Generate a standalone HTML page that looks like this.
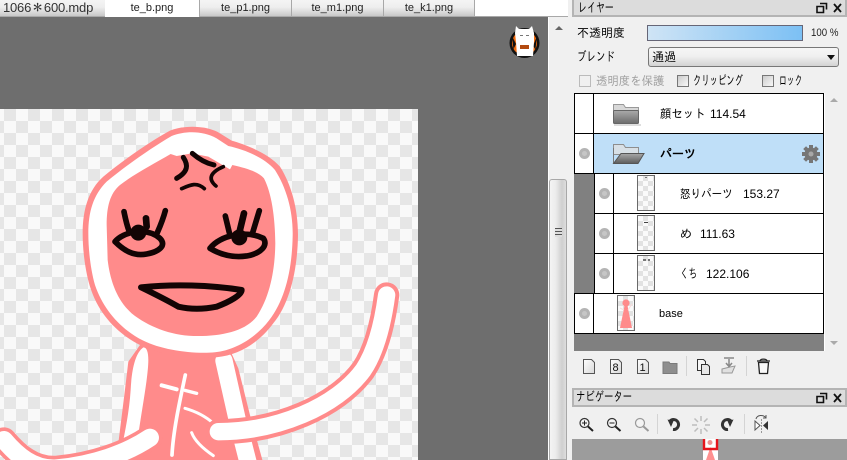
<!DOCTYPE html>
<html><head><meta charset="utf-8">
<style>
html,body{margin:0;padding:0;background:#f0f0f0}
#r{position:relative;width:847px;height:460px;overflow:hidden;background:#f0f0f0;font:12px "Liberation Sans","IPAGothic",sans-serif;color:#000}
.a{position:absolute;box-sizing:border-box}
.t{position:absolute;white-space:pre;line-height:14px;font-size:12px;font-family:"Liberation Sans","IPAGothic",sans-serif;transform-origin:0 50%}
.tab{position:absolute;top:0;height:16px;background:linear-gradient(#f4f4f4,#eeeeee 45%,#c8c8c8);border-right:1px solid #a8a8a8;text-align:center;line-height:16px;font-size:11px;color:#222}
.row{position:absolute;left:574px;width:250px;height:41px;border:1px solid #000;background:#fff;box-sizing:border-box}
.chk{position:absolute;top:75px;width:12px;height:12px;border:1px solid #777;background:linear-gradient(135deg,#ccc,#f8f8f8);box-sizing:border-box}
.dot{position:absolute;width:11px;height:11px;border-radius:50%;background:#b4b4b4}
.dot:after{content:"";position:absolute;left:3px;top:3px;width:5px;height:5px;border-radius:50%;background:#c6c6c6}
.v{position:absolute;top:0;bottom:0;width:1px;background:#000}
.thumb{position:absolute;width:18px;height:36px;border:1px solid #6a6a6a;box-sizing:border-box;background-color:#fff;background-image:conic-gradient(#e2e2e2 25%,#fafafa 0 50%,#e2e2e2 0 75%,#fafafa 0);background-size:10px 10px}
.ttl{position:absolute;left:572px;width:275px;height:17px;background:#dcdcdc;border:2px solid #b4b4b4;box-sizing:border-box}
</style></head><body><div id="r">

<!-- tabs -->
<div class="a" style="left:0;top:0;width:570px;height:17px;background:#fff;border-bottom:1px solid #a8a8a8"></div>
<div class="tab" style="left:0;width:105px;font-size:13px;text-align:left;padding-left:3px;color:#333;border-right:1px solid #999;letter-spacing:-.2px">1066＊600.mdp</div>
<div class="tab" style="left:105px;width:94px;background:#fff;height:17px">te_b.png</div>
<div class="tab" style="left:200px;width:91px">te_p1.png</div>
<div class="tab" style="left:292px;width:91px">te_m1.png</div>
<div class="tab" style="left:384px;width:90px">te_k1.png</div>

<!-- canvas -->
<svg class="a" style="left:0;top:17px" width="549" height="443" viewBox="0 17 549 443">
<defs>
<pattern id="ck" x="4" y="1" width="24" height="24" patternUnits="userSpaceOnUse">
<rect width="24" height="24" fill="#f9f9f9"/><rect x="12" width="12" height="12" fill="#e6e6e6"/><rect y="12" width="12" height="12" fill="#e6e6e6"/>
</pattern>
</defs>
<rect x="0" y="17" width="549" height="443" fill="#6e6e6e"/>
<rect x="0" y="109" width="418" height="351" fill="url(#ck)"/>

<!-- body -->
<g transform="translate(0,340) scale(.3333)">
<path d="M420 15 L385 65 C375 150 365 230 355 310 L345 370 L790 370 L750 225 L715 85 L690 30 Z" fill="#ff8b8b"/>
<path d="M430 22 C405 40 395 90 392 150 C388 210 378 260 370 300 L415 285 C425 210 445 110 445 60 C445 35 440 22 430 22Z" fill="#fff"/>
<path d="M672 62 L712 240 L745 370" fill="none" stroke="#fff" stroke-width="52" stroke-linecap="round"/>
<g fill="none" stroke="#fff" stroke-linecap="round">
<path d="M556 105 C540 180 520 270 516 345" stroke-width="11"/>
<path d="M485 136 L530 148" stroke-width="12"/>
<path d="M555 151 L590 160" stroke-width="10"/>
<path d="M555 205 C590 215 620 232 640 250" stroke-width="9"/>
<path d="M575 278 C585 305 615 330 640 347" stroke-width="9"/>
</g>
<!-- left arm -->
<path d="M450 293 C380 340 280 375 170 385 C100 390 50 345 12 300" fill="none" stroke="#ff8b8b" stroke-width="76" stroke-linecap="round"/>
<path d="M450 293 C380 340 280 375 170 385 C100 390 50 345 12 300" fill="none" stroke="#fff" stroke-width="54" stroke-linecap="round"/>
<!-- right arm -->
<path d="M655 275 C830 275 1010 200 1090 90 C1130 30 1150 -60 1160 -135" fill="none" stroke="#ff8b8b" stroke-width="76" stroke-linecap="round"/>
<path d="M655 275 C830 275 1010 200 1090 90 C1130 30 1150 -60 1160 -135" fill="none" stroke="#fff" stroke-width="52" stroke-linecap="round"/>
</g>

<!-- head -->
<g transform="translate(60,110) scale(.3333)">
<path d="M68 370 C68 300 85 240 130 200 C190 150 270 95 330 62 C370 45 440 45 480 70 L515 92 C560 105 625 130 660 170 C695 225 715 300 714 380 C712 480 690 580 640 640 C600 695 540 735 470 742 C400 750 300 735 240 705 C170 670 115 610 90 530 C75 480 68 420 68 370Z" fill="#ff8b8b"/>
<path d="M85 370 C85 305 100 255 140 215 C200 165 280 110 335 78 C375 62 430 62 470 85 L505 108 C560 120 615 145 645 180 C680 235 700 305 698 380 C696 480 675 570 628 630 C590 680 530 720 465 727 C400 733 305 720 250 692 C185 660 130 600 105 525 C92 480 85 420 85 370Z" fill="#fff"/>
<path d="M140 345 C140 290 150 250 180 225 C225 190 285 160 332 132 L350 138 L395 130 L445 140 L510 178 L517 165 C560 175 595 185 612 205 C635 250 645 320 646 400 C645 480 630 560 590 620 C555 665 480 680 400 678 C330 675 265 650 215 610 C170 570 150 510 143 450Z" fill="#ff8b8b"/>
<g fill="none" stroke="#120404" stroke-linecap="round" stroke-linejoin="round">
<path d="M370 142 C385 165 385 185 350 205" stroke-width="15"/>
<path d="M397 130 C420 150 440 160 462 165" stroke-width="15"/>
<path d="M490 170 C455 185 440 205 468 228" stroke-width="11"/>
<path d="M365 236 C390 225 410 215 433 236" stroke-width="11"/>
<path d="M165 395 C190 365 260 350 300 385 C320 405 300 425 260 432 C220 440 190 420 165 395Z" stroke-width="17"/>
<path d="M192 305 C196 325 200 345 208 365" stroke-width="17"/>
<path d="M258 325 L260 350" stroke-width="20"/>
<path d="M316 302 C310 325 302 345 292 368" stroke-width="17"/>
<path d="M450 415 C480 375 560 360 610 385 C625 405 605 430 560 438 C510 445 475 430 450 415Z" stroke-width="17"/>
<path d="M496 318 L508 368" stroke-width="17"/>
<path d="M552 310 L538 368" stroke-width="20"/>
<path d="M598 302 L578 368" stroke-width="17"/>
<path d="M243 532 C340 522 450 525 545 540 C545 555 510 575 470 590 C430 598 390 598 355 590 C320 570 280 550 243 532Z" stroke-width="18"/>
</g>
<circle cx="235" cy="368" r="24" fill="#120404"/>
<circle cx="538" cy="382" r="24" fill="#120404"/>
</g>

<!-- logo -->
<g>
<circle cx="524.500" cy="43" r="15" fill="#111"/>
<circle cx="524.500" cy="43" r="12.500" fill="#ee6a10"/>
<path d="M512 36 L516 44 L513 50 L519 54 L514 54Z M537 36 L533 46 L536 50 L530 54 L535 53Z" fill="#111"/>
<path d="M516 26 L519 29 L529 29 L532 26 L534 33 L534 42 L533 56 L517 56 L516 42 L515 33Z" fill="#fff"/>
<rect x="520" y="35" width="3" height="1" fill="#777"/><rect x="526" y="35" width="3" height="1" fill="#777"/>
<rect x="520" y="45" width="9" height="4" fill="#b34a10"/>
</g>
</svg>

<!-- scrollbar main -->
<div class="a" style="left:548px;top:17px;width:1px;height:443px;background:#fff"></div>
<div class="a" style="left:549px;top:17px;width:19px;height:443px;background:#f0f0f0"></div>
<div class="a" style="left:555px;top:26px;border:4px solid transparent;border-top:0;border-bottom:4px solid #666;width:0;height:0"></div>
<div class="a" style="left:549px;top:179px;width:18px;height:281px;border:1px solid #a8a8a8;border-radius:3px 3px 0 0;background:linear-gradient(90deg,#f4f4f4,#ececec 35%,#cfcfcf 75%,#dedede)"></div>
<div class="a" style="left:555px;top:228px;width:7px;height:9px;background:repeating-linear-gradient(#555 0 1px,#ddd 1px 2px,#ddd 2px 3px)"></div>
<div class="a" style="left:568px;top:0;width:279px;height:460px;background:#f0f0f0"></div>

<!-- layer title -->
<div class="ttl" style="top:0;height:17px;border-top:0"></div>
<div class="t" style="left:578px;top:1px;font-size:13px;transform:scaleX(.69)">レイヤー</div>
<svg class="a" style="left:815px;top:1px" width="28" height="14" viewBox="0 0 28 14">
<path d="M5 2.500h6.500v6M2 5.500h6.500v6H2z" fill="none" stroke="#111" stroke-width="1.600"/>
<path d="M19 3l7 8M26 3l-7 8" stroke="#111" stroke-width="1.800"/>
</svg>

<!-- opacity -->
<div class="t" style="left:577px;top:26px">不透明度</div>
<div class="a" style="left:647px;top:25px;width:156px;height:16px;border:1px solid #667;background:linear-gradient(90deg,#cfe4f5,#7cc0f4)"></div>
<div class="t" style="left:811px;top:26px;font-size:11px;color:#222;transform:scaleX(.88)">100 %</div>

<!-- blend -->
<div class="t" style="left:577px;top:50px;font-size:13px;transform:scaleX(.73)">ブレンド</div>
<div class="a" style="left:648px;top:47px;width:191px;height:20px;border:1px solid #777;border-radius:3px;background:linear-gradient(#f6f6f6,#f0f0f0 45%,#d2d2d2)"></div>
<div class="t" style="left:652px;top:50px">通過</div>
<div class="a" style="left:827px;top:55px;width:0;height:0;border:4px solid transparent;border-top:5px solid #111;border-bottom:0"></div>

<!-- checks -->
<div class="chk" style="left:579px;background:#f0f0f0;border-color:#bbb"></div>
<div class="t" style="left:596px;top:74px;color:#a0a0a0;transform:scaleX(.95)">透明度を保護</div>
<div class="chk" style="left:677px"></div>
<div class="t" style="left:693px;top:74px;font-size:13px;transform:scaleX(.64)">クリッピング</div>
<div class="chk" style="left:762px"></div>
<div class="t" style="left:779px;top:74px;font-size:13px;transform:scaleX(.6)">ロック</div>

<!-- layer list -->
<div class="a" style="left:574px;top:93px;width:250px;height:258px;background:#808080"></div>
<div class="row" style="top:93px"><div class="v" style="left:18px"></div></div>
<div class="row" style="top:133px;background:#bfdff8"><div class="a" style="left:0;top:0;width:18px;bottom:0;background:#fff"></div><div class="v" style="left:18px"></div></div>
<div class="row" style="top:173px;left:594px;width:230px"><div class="v" style="left:18px"></div></div>
<div class="row" style="top:213px;left:594px;width:230px"><div class="v" style="left:18px"></div></div>
<div class="row" style="top:253px;left:594px;width:230px"><div class="v" style="left:18px"></div></div>
<div class="row" style="top:293px"><div class="v" style="left:18px"></div></div>

<div class="dot" style="left:579px;top:148px"></div>
<div class="dot" style="left:599px;top:188px"></div>
<div class="dot" style="left:599px;top:228px"></div>
<div class="dot" style="left:599px;top:268px"></div>
<div class="dot" style="left:579px;top:308px"></div>

<!-- folders -->
<svg class="a" style="left:612px;top:103px" width="30" height="24" viewBox="0 0 30 24">
<defs><linearGradient id="fg" x1="0" y1="0" x2="0" y2="1"><stop offset="0" stop-color="#ababab"/><stop offset="1" stop-color="#6c6c6c"/></linearGradient></defs>
<path d="M1.500 1.500h10l2 3h13v6h-25z" fill="#d8d8d8" stroke="#999"/>
<rect x="1.500" y="7.500" width="25" height="13" rx="1" fill="url(#fg)" stroke="#666"/>
<rect x="2" y="21" width="27" height="2" fill="#dedede"/>
</svg>
<svg class="a" style="left:612px;top:143px" width="34" height="24" viewBox="0 0 34 24">
<defs><linearGradient id="fo" x1="0" y1="0" x2="0" y2="1"><stop offset="0" stop-color="#a8a8a8"/><stop offset="1" stop-color="#5c5c5c"/></linearGradient></defs>
<path d="M1.500 1.500h10l2 3h13v7h-25z" fill="#d8e0e6" stroke="#8e8e8e"/>
<path d="M1.500 5v15" stroke="#777"/>
<path d="M1.500 20.500 L9 10.500 H32 L26 20.500Z" fill="url(#fo)" stroke="#555"/>
</svg>
<!-- gear -->
<svg class="a" style="left:801px;top:144px" width="20" height="20" viewBox="0 0 20 20">
<g fill="#767676"><circle cx="10" cy="10" r="6.500"/>
<rect x="8" y="1" width="4" height="18"/>
<rect x="8" y="1" width="4" height="18" transform="rotate(45 10 10)"/>
<rect x="8" y="1" width="4" height="18" transform="rotate(90 10 10)"/>
<rect x="8" y="1" width="4" height="18" transform="rotate(135 10 10)"/></g>
<circle cx="10" cy="10" r="2.500" fill="#a8a8a8"/>
</svg>

<div class="t" style="left:660px;top:107px;transform:scaleX(.95)">顔セット</div>
<div class="t" style="left:710px;top:107px">114.54</div>
<div class="t" style="left:660px;top:147px;font-weight:bold">パーツ</div>

<div class="thumb" style="left:637px;top:175px"></div>
<div class="thumb" style="left:637px;top:215px"></div>
<div class="thumb" style="left:637px;top:255px"></div>
<div class="a" style="left:645px;top:177px;width:2px;height:1px;background:#777"></div>
<div class="a" style="left:644px;top:222px;width:4px;height:1px;background:#444"></div>
<div class="a" style="left:643px;top:259px;width:3px;height:2px;background:#777"></div>
<div class="a" style="left:648px;top:259px;width:2px;height:2px;background:#777"></div>

<div class="t" style="left:680px;top:187px;transform:scaleX(.88)">怒りパーツ</div>
<div class="t" style="left:743px;top:187px">153.27</div>
<div class="t" style="left:680px;top:227px">め</div>
<div class="t" style="left:700px;top:227px">111.63</div>
<div class="t" style="left:680px;top:267px;font-size:13px;transform:scaleX(.66)">くち</div>
<div class="t" style="left:706px;top:267px">122.106</div>

<div class="thumb" style="left:617px;top:295px"></div>
<svg class="a" style="left:618px;top:296px" width="16" height="34" viewBox="0 0 16 34">
<circle cx="8" cy="7" r="3.600" fill="#ff8b8b"/>
<path d="M6.500 10h3L14 32H2z" fill="#ff8b8b"/>
<path d="M2 12l4 2M14 8l-4 6" stroke="#fbdcdc" stroke-width="1"/>
</svg>
<div class="t" style="left:659px;top:307px;font-size:11px">base</div>

<!-- list scroll -->
<div class="a" style="left:824px;top:93px;width:1px;height:258px;background:#fff"></div>
<div class="a" style="left:830px;top:98px;width:0;height:0;border:4px solid transparent;border-top:0;border-bottom:4px solid #aaa"></div>
<div class="a" style="left:830px;top:341px;width:0;height:0;border:4px solid transparent;border-bottom:0;border-top:4px solid #aaa"></div>

<!-- toolbar 1 -->
<svg class="a" style="left:572px;top:352px" width="275" height="30" viewBox="572 352 275 30">
<defs><linearGradient id="pg" x1="0" y1="0" x2="1" y2="1"><stop offset="0" stop-color="#fff"/><stop offset="1" stop-color="#d8d8d8"/></linearGradient></defs>
<g fill="url(#pg)" stroke="#555" stroke-width="1">
<path d="M583.500 359.500h8l3 3v11h-11z"/>
<path d="M610.500 359.500h8l3 3v11h-11z"/>
<path d="M637.500 359.500h8l3 3v11h-11z"/>
</g>
<text x="612.500" y="371" font-size="11" font-family="Liberation Sans" fill="#111">8</text>
<text x="639.500" y="371" font-size="11" font-family="Liberation Sans" fill="#111">1</text>
<path d="M663 362h6l1 1.500h7v10h-14z" fill="#8e8e8e" stroke="#7a7a7a"/>
<rect x="686" y="356" width="1" height="20" fill="#d4d4d4"/>
<path d="M697.500 359.500h6l2 2v9h-8z" fill="#f6f6f6" stroke="#333"/>
<path d="M701.500 364.500h6l2 2v8h-8z" fill="#e8e8e8" stroke="#333"/>
<path d="M722 369l8-2 5-1-3 7h-10z" fill="#e0e0e0" stroke="#999"/>
<path d="M729 359v7M726 363l3 3.500 3-3.500M724 358h10" fill="none" stroke="#888" stroke-width="1.500"/>
<rect x="746" y="356" width="1" height="20" fill="#d4d4d4"/>
<path d="M758.500 362.500h10l-1 11h-8z" fill="#f8f8f8" stroke="#222" stroke-width="1.300"/>
<path d="M757 361h13M760 361c0-2.500 7-2.500 7 0" fill="none" stroke="#222" stroke-width="1.300"/>
</svg>

<!-- navigator title -->
<div class="ttl" style="top:388px;height:19px"></div>
<div class="t" style="left:576px;top:390px;font-size:13px;transform:scaleX(.72)">ナビゲーター</div>
<svg class="a" style="left:815px;top:391px" width="28" height="14" viewBox="0 0 28 14">
<path d="M5 2.500h6.500v6M2 5.500h6.500v6H2z" fill="none" stroke="#111" stroke-width="1.600"/>
<path d="M19 3l7 8M26 3l-7 8" stroke="#111" stroke-width="1.800"/>
</svg>

<!-- toolbar 2 -->
<svg class="a" style="left:572px;top:412px" width="275" height="27" viewBox="572 412 275 27">
<g fill="#f4f4f4" stroke="#333" stroke-width="1.200">
<circle cx="584.500" cy="423" r="4.500"/><circle cx="612" cy="423" r="4.500"/>
</g>
<path d="M582 423h5M584.500 420.500v5M609.500 423h5" stroke="#222" stroke-width="1"/>
<path d="M588 426.500l5 4.500M615.500 426.500l5 4.500" stroke="#222" stroke-width="2"/>
<circle cx="640" cy="423" r="4.500" fill="#f4f4f4" stroke="#999" stroke-width="1.200"/>
<path d="M643.500 426.500l5 4.500" stroke="#999" stroke-width="2"/>
<rect x="657" y="414" width="1" height="20" fill="#d4d4d4"/>
<path d="M670 421a5 5 0 1 1 3 8.500" fill="none" stroke="#333" stroke-width="3"/>
<path d="M667.500 419.500l6 1.500-2.500 6z" fill="#333"/>
<g stroke="#bdbdbd" stroke-width="1.500">
<path d="M701 416v5M701 429v5M692 425h5M705 425h5M694.500 418.500l3.500 3.500M704 428l3.500 3.500M707.500 418.500L704 422M698 428l-3.500 3.500"/>
</g>
<path d="M731 421a5 5 0 1 0-3 8.500" fill="none" stroke="#333" stroke-width="3"/>
<path d="M733.500 419.500l-6 1.500 2.500 6z" fill="#333"/>
<rect x="744" y="414" width="1" height="20" fill="#d4d4d4"/>
<path d="M755 421l5 4.500-5 4.500z" fill="#fff" stroke="#555"/>
<path d="M768 421l-5 4.500 5 4.500z" fill="#333"/>
<path d="M761.500 419v14" stroke="#999" stroke-dasharray="2 1"/>
<path d="M756 419c1-4 7-5 10-1M766 415v3h-3" fill="none" stroke="#555"/>
</svg>

<!-- navigator canvas -->
<div class="a" style="left:572px;top:439px;width:275px;height:21px;background:#9c9c9c"></div>
<svg class="a" style="left:700px;top:439px" width="24" height="21" viewBox="0 0 24 21">
<rect x="3" y="0" width="15" height="21" fill="#fff"/>
<path d="M10.500 8 L6 21 H15Z" fill="#ff9090"/>
<circle cx="10" cy="3.500" r="2.500" fill="#f09090"/>
<path d="M4 0v10h13V0" fill="none" stroke="#e6141c" stroke-width="2.400"/>
</svg>

</div></body></html>
